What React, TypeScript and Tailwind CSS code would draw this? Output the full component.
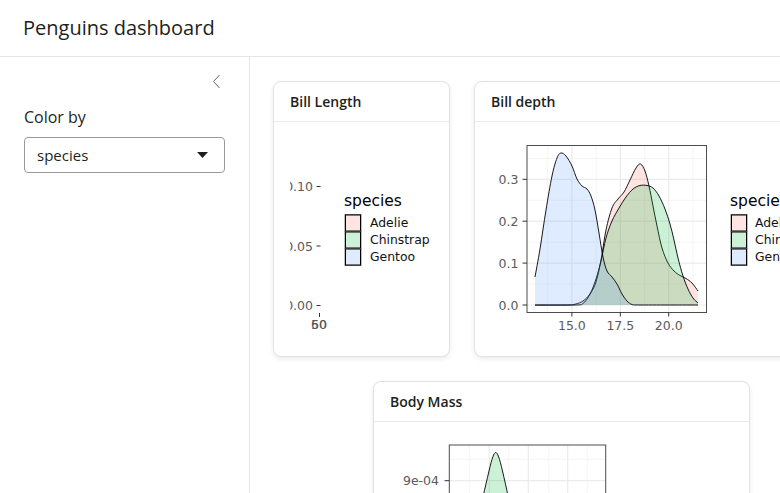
import React from "react";

type P = [number, number];

function smooth(pts: P[]): string {
  let d = `M${pts[0][0]},${pts[0][1]}`;
  for (let i = 0; i < pts.length - 1; i++) {
    const p0 = pts[i - 1] || pts[i];
    const p1 = pts[i];
    const p2 = pts[i + 1];
    const p3 = pts[i + 2] || p2;
    const c1x = p1[0] + (p2[0] - p0[0]) / 6;
    const c1y = Math.min(305, p1[1] + (p2[1] - p0[1]) / 6);
    const c2x = p2[0] - (p3[0] - p1[0]) / 6;
    const c2y = Math.min(305, p2[1] - (p3[1] - p1[1]) / 6);
    d += ` C${c1x.toFixed(2)},${c1y.toFixed(2)} ${c2x.toFixed(2)},${c2y.toFixed(2)} ${p2[0]},${p2[1]}`;
  }
  return d;
}

const ADELIE = "#F8766D";
const CHIN = "#00BA38";
const GENTOO = "#619CFF";

const adelie: P[] = [
  [535, 305], [565, 305], [575, 304.2], [583, 301], [590, 294], [596, 282], [601, 260], [606, 230],
  [612, 208], [618, 199], [624, 192], [630, 180], [636, 168], [640.5, 164], [645, 171], [649, 186],
  [653, 206], [657, 226], [662, 248], [668, 263], [674, 271], [680, 275.5], [686, 278.5], [692, 283], [698, 291],
];
const chin: P[] = [
  [535, 305], [575, 305], [583, 303.5], [590, 294], [596, 279], [601, 261], [606, 238], [612, 221],
  [619, 208], [626, 197], [633, 189], [640, 185.5], [647, 185.5], [653, 188], [659, 196], [665, 209],
  [670, 224], [674, 240], [678, 258], [683, 276], [688, 289], [693, 298], [698, 303],
];
const gentoo: P[] = [
  [535, 277], [540, 249], [546, 210], [552, 176], [557, 158], [561, 153], [566, 156], [572, 166],
  [577, 179], [582, 186], [587, 189], [591, 196], [595, 210], [599, 233], [603, 257], [607, 271],
  [612, 277], [617, 284], [622, 294], [627, 301], [632, 304.5], [640, 305], [698, 305],
];

function Density({ pts, color }: { pts: P[]; color: string }) {
  const line = smooth(pts);
  const first = pts[0];
  const last = pts[pts.length - 1];
  return (
    <g>
      <path d={`${line} L${last[0]},305 L${first[0]},305 Z`} fill={color} fillOpacity={0.2} stroke="none" />
      <path d={line} fill="none" stroke="#000" strokeWidth={0.9} />
    </g>
  );
}

function Legend({ x, keyX, labelX }: { x: number; keyX: number; labelX: number }) {
  const items: [string, string][] = [
    ["Adelie", ADELIE],
    ["Chinstrap", CHIN],
    ["Gentoo", GENTOO],
  ];
  return (
    <g style={{ fontFamily: "'DejaVu Sans', sans-serif" }}>
      <text x={x} y={205.5} fontSize={15.5} fill="#000">
        species
      </text>
      {items.map(([name, c], i) => (
        <g key={name}>
          <rect x={keyX} y={214.5 + i * 17} width={16} height={17} fill="#fff" stroke="#7f7f7f" strokeWidth={1} />
          <rect x={keyX + 0.5} y={215 + i * 17} width={15} height={16} fill={c} fillOpacity={0.2} stroke="#000" strokeWidth={1} />
          <text x={labelX} y={227 + i * 17} fontSize={12.4} fill="#111">
            {name}
          </text>
        </g>
      ))}
    </g>
  );
}

function Card({ title, className, children }: { title: string; className: string; children: React.ReactNode }) {
  return (
    <div
      className={`flex flex-col shrink-0 rounded-[8px] border border-[#e2e2e2] bg-white shadow-[0_2px_5px_rgba(0,0,0,0.08)] overflow-hidden ${className}`}
    >
      <div className="h-[40px] flex items-center px-4 pb-[1px] border-b border-[#ebebeb] text-[14px] font-semibold text-[#1d1f21]">
        {title}
      </div>
      <div className="flex-1 overflow-hidden">{children}</div>
    </div>
  );
}

const FS = 12.5;
const AX = "#5a5a5a";

export default function App() {
  const vMajor = [571.9, 620.3, 668.7];
  const vMinor = [547.7, 596.2, 644.6, 693];
  const hMajor = [305, 263.1, 221.2, 179.3];
  const hMinor = [284, 242.2, 200.3, 158.4];
  const axisText = { fontFamily: "'DejaVu Sans', sans-serif" };

  return (
    <div
      className="w-[780px] h-[493px] overflow-hidden bg-white flex flex-col text-[#1d1f21]"
      style={{ fontFamily: "'Open Sans', 'Noto Sans', sans-serif" }}
    >
      <header className="h-[57px] shrink-0 flex items-center px-[23px] pb-[1px] border-b border-[#e6e6e6]">
        <h1 className="text-[20px] font-normal leading-none">Penguins dashboard</h1>
      </header>
      <div className="flex flex-1 min-h-0">
        <aside className="w-[250px] shrink-0 border-r border-[#e6e6e6] px-6 pt-[17px]">
          <div className="flex justify-end h-[14px] pr-[4px]">
            <svg width="9" height="15" viewBox="0 0 9 15">
              <polyline points="7.5,1 1.5,7.5 7.5,14" fill="none" stroke="#666" strokeWidth="1" />
            </svg>
          </div>
          <div className="mt-[17px] text-[16px] leading-[24px]">Color by</div>
          <div className="mt-2 w-[201px] h-[36px] border border-[#999] rounded-[4px] flex items-center justify-between pl-3 pr-[16px]">
            <span className="text-[15px]">species</span>
            <svg width="11" height="6" viewBox="0 0 11 6">
              <polygon points="0,0 11,0 5.5,6" fill="#1d1f21" />
            </svg>
          </div>
        </aside>
        <main className="flex-1 min-w-0 overflow-hidden pt-6 pl-[23px]">
          <div className="flex gap-6">
            <Card title="Bill Length" className="w-[177px] h-[276px]">
              <div className="p-4">
                <svg width="143" height="203" viewBox="290 138 143 203" style={axisText}>
                  {[
                    ["0.10", 186.5],
                    ["0.05", 246],
                    ["0.00", 305.5],
                  ].map(([t, y]) => (
                    <g key={t as string}>
                      <text x={313} y={(y as number) + 4.5} fontSize={FS} fill={AX} textAnchor="end">
                        {t}
                      </text>
                      <line x1={316.5} x2={320.5} y1={y as number} y2={y as number} stroke="#333" strokeWidth={1} />
                    </g>
                  ))}
                  <line x1={319.5} x2={319.5} y1={313} y2={317} stroke="#333" strokeWidth={1} />
                  <text x={319} y={329} fontSize={FS} fill={AX} textAnchor="middle">
                    50
                  </text>
                  <text x={319} y={329} fontSize={FS} fill={AX} textAnchor="middle">
                    60
                  </text>
                  <Legend x={344} keyX={345} labelX={370} />
                </svg>
              </div>
            </Card>
            <Card title="Bill depth" className="w-[330px] h-[276px]">
              <svg width="328" height="234" viewBox="475 122 328 234" style={axisText}>
                <rect x={527} y={145.5} width={179.5} height={167} fill="#fff" />
                {hMinor.map((y) => (
                  <line key={"hm" + y} x1={527} x2={706.5} y1={y} y2={y} stroke="#f2f2f2" strokeWidth={0.8} />
                ))}
                {vMinor.map((x) => (
                  <line key={"vm" + x} x1={x} x2={x} y1={145.5} y2={312.5} stroke="#f2f2f2" strokeWidth={0.8} />
                ))}
                {hMajor.map((y) => (
                  <line key={"h" + y} x1={527} x2={706.5} y1={y} y2={y} stroke="#ebebeb" strokeWidth={1.2} />
                ))}
                {vMajor.map((x) => (
                  <line key={"v" + x} x1={x} x2={x} y1={145.5} y2={312.5} stroke="#ebebeb" strokeWidth={1.2} />
                ))}
                <Density pts={adelie} color={ADELIE} />
                <Density pts={chin} color={CHIN} />
                <Density pts={gentoo} color={GENTOO} />
                <rect x={527} y={145.5} width={179.5} height={167} fill="none" stroke="#4d4d4d" strokeWidth={1} />
                {[
                  ["0.3", 179.3],
                  ["0.2", 221.2],
                  ["0.1", 263.1],
                  ["0.0", 305],
                ].map(([t, y]) => (
                  <g key={t as string}>
                    <text x={518.5} y={(y as number) + 4.5} fontSize={FS} fill={AX} textAnchor="end">
                      {t}
                    </text>
                    <line x1={522.5} x2={527} y1={y as number} y2={y as number} stroke="#333" strokeWidth={1} />
                  </g>
                ))}
                {[
                  ["15.0", 571.9],
                  ["17.5", 620.3],
                  ["20.0", 668.7],
                ].map(([t, x]) => (
                  <g key={t as string}>
                    <line x1={x as number} x2={x as number} y1={312.5} y2={316.5} stroke="#333" strokeWidth={1} />
                    <text x={x as number} y={330} fontSize={FS} fill={AX} textAnchor="middle">
                      {t}
                    </text>
                  </g>
                ))}
                <Legend x={730} keyX={731} labelX={755} />
              </svg>
            </Card>
          </div>
          <div className="mt-6 pl-[100px]">
            <Card title="Body Mass" className="w-[377px] h-[300px]">
              <svg width="375" height="200" viewBox="374 422 375 200" style={axisText}>
                <rect x={449.3} y={445} width={156.4} height={200} fill="#fff" />
                {[469.3, 489.3, 508.3, 528.3, 548.3, 567.7, 587.7].map((x, i) => (
                  <line
                    key={x}
                    x1={x}
                    x2={x}
                    y1={445}
                    y2={640}
                    stroke={i % 2 === 0 ? "#f2f2f2" : "#ebebeb"}
                    strokeWidth={i % 2 === 0 ? 0.8 : 1.2}
                  />
                ))}
                <line x1={449.3} x2={605.7} y1={459.3} y2={459.3} stroke="#f2f2f2" strokeWidth={0.8} />
                <line x1={449.3} x2={605.7} y1={480.7} y2={480.7} stroke="#ebebeb" strokeWidth={1.2} />
                <line x1={449.3} x2={605.7} y1={502.1} y2={502.1} stroke="#f2f2f2" strokeWidth={0.8} />
                <path
                  d="M476,530 C481,505 485,488 489,471 C492,458 494,452.5 495.7,452.5 C497.5,452.5 499.5,458 502.5,471 C506.5,488 510,505 515,530 Z"
                  fill={CHIN}
                  fillOpacity={0.2}
                  stroke="none"
                />
                <path
                  d="M476,530 C481,505 485,488 489,471 C492,458 494,452.5 495.7,452.5 C497.5,452.5 499.5,458 502.5,471 C506.5,488 510,505 515,530"
                  fill="none"
                  stroke="#000"
                  strokeWidth={0.9}
                />
                <rect x={449.3} y={445} width={156.4} height={200} fill="none" stroke="#4d4d4d" strokeWidth={1} />
                <text x={439} y={485} fontSize={FS} fill={AX} textAnchor="end">
                  9e-04
                </text>
                <line x1={444.5} x2={449.3} y1={480.7} y2={480.7} stroke="#333" strokeWidth={1} />
              </svg>
            </Card>
          </div>
        </main>
      </div>
    </div>
  );
}
